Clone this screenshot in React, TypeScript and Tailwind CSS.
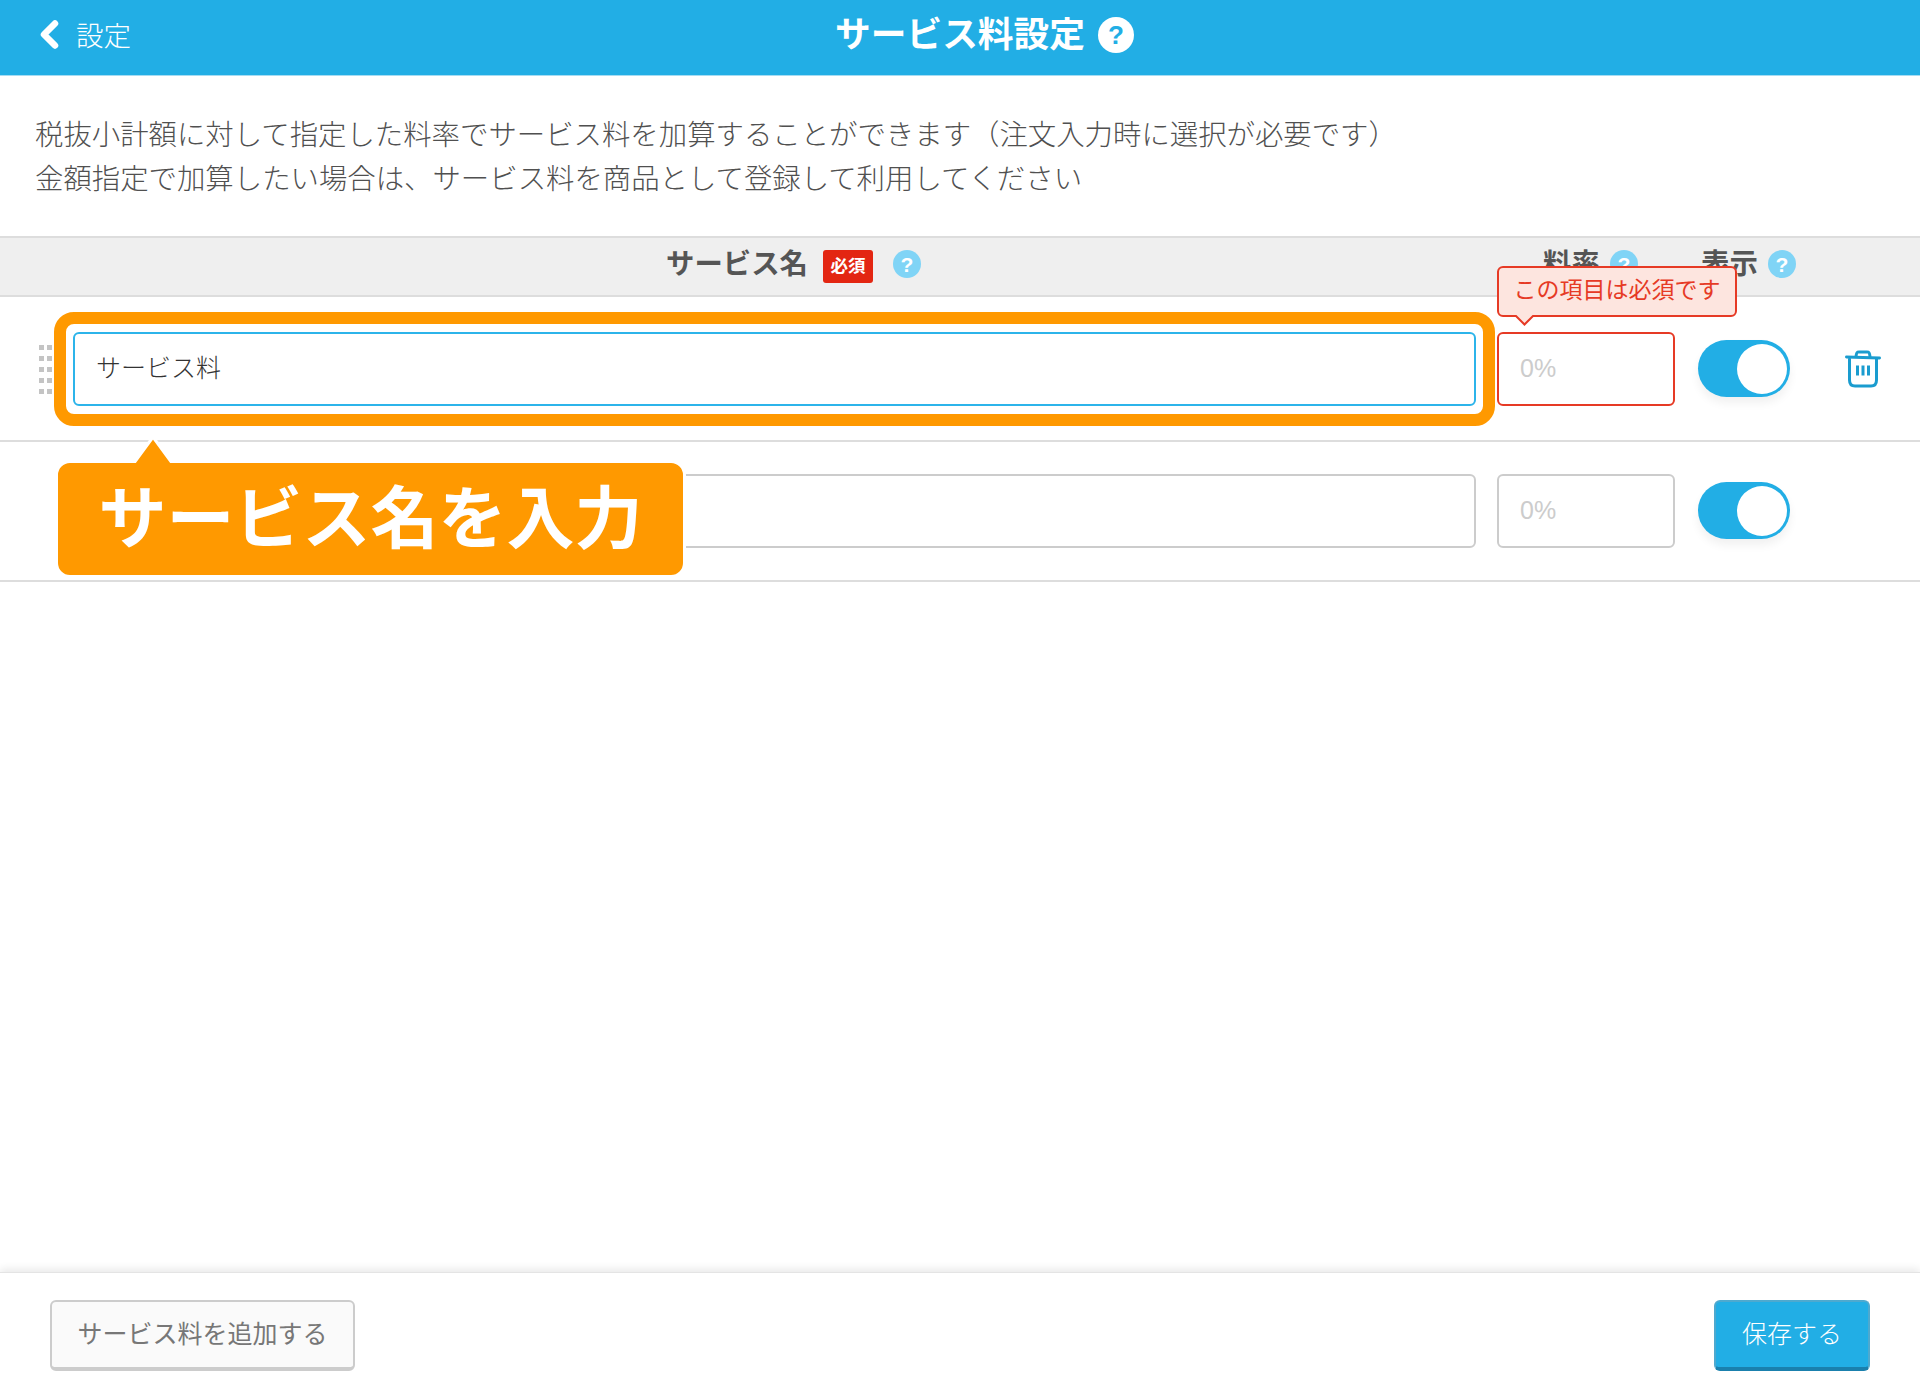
const font = "[font-family:'Liberation_Sans','Noto_Sans_CJK_JP',sans-serif]";

function Help({ white }: { white?: boolean }) {
  return (
    <span
      className={
        white
          ? "flex h-[36px] w-[36px] items-center justify-center rounded-full bg-white text-[26px] font-bold leading-none text-[#22aee5]"
          : "flex h-[28px] w-[28px] items-center justify-center rounded-full bg-[#80d4f6] text-[21px] font-bold leading-none text-white"
      }
    >
      ?
    </span>
  );
}

function Toggle() {
  return (
    <div className="mb-[1px] flex h-[57px] w-[92px] items-center justify-end rounded-full bg-[#22aee5] pr-[3px] shadow-[0_6px_10px_rgba(0,0,0,0.06)]">
      <div className="h-[50px] w-[50px] rounded-full bg-white" />
    </div>
  );
}

function Trash() {
  return (
    <svg width="36" height="38" viewBox="0 0 36 38" fill="none" stroke="#1a9ccf" strokeWidth="3" strokeLinecap="round" strokeLinejoin="round">
      <path d="M1.5 7 L34.5 8" />
      <path d="M11 6.5 C11.5 2.5 12 2 14 2 H22 C24 2 24.5 2.5 25 6.5" />
      <path d="M4.5 9 V30 C4.5 34 6.5 36 10 36 H26 C29.5 36 31.5 34 31.5 30 V9" />
      <path d="M12.5 15.5 V25.5 M18 15.5 V25.5 M23.5 15.5 V25.5" strokeWidth="3" strokeLinecap="butt" />
    </svg>
  );
}

function Handle() {
  return (
    <div className="grid w-[13px] grid-cols-[5px_5px] gap-x-[3px] gap-y-[6px]">
      {Array.from({ length: 10 }).map((_, i) => (
        <span key={i} className="h-[5px] w-[5px] bg-[#c4c4c4]" />
      ))}
    </div>
  );
}

export default function App() {
  return (
    <div className={`flex min-h-[1400px] flex-col bg-white ${font}`}>
      <header className="grid h-[76px] shrink-0 grid-cols-[1fr_auto_1fr] items-center border-b border-[#a5dcf3] bg-[#22aee5] pb-[6px] text-white">
        <div className="flex items-center pl-[40px]">
          <svg width="19" height="29" viewBox="0 0 19 29" fill="none" stroke="white" strokeWidth="6.5" strokeLinecap="round" strokeLinejoin="round">
            <path d="M15 3.5 L4 14.5 L15 25.5" />
          </svg>
          <span className="ml-[17px] mt-[4px] text-[27.5px] font-light">設定</span>
        </div>
        <h1 className="mt-[2px] text-[35.7px] font-bold leading-none">サービス料設定</h1>
        <div className="pl-[13px]">
          <Help white />
        </div>
      </header>

      <div className="h-[160px] shrink-0 pl-[35px] pt-[37px] text-[28.4px] font-light leading-[44px] text-[#505050]">
        <p className="whitespace-nowrap">税抜小計額に対して指定した料率でサービス料を加算することができます（注文入力時に選択が必要です）</p>
        <p className="whitespace-nowrap">金額指定で加算したい場合は、サービス料を商品として登録して利用してください</p>
      </div>

      <div className="flex h-[61px] shrink-0 items-center border-y-2 border-[#dddddd] bg-[#efefef] pb-[4px] text-[28.4px] font-bold text-[#555555]">
        <div className="ml-[74px] flex w-[1401px] items-center justify-center pl-[38px]">
          <span>サービス名</span>
          <span className="ml-[15px] mt-[4px] flex h-[33px] w-[50px] items-center justify-center rounded-[3px] bg-[#e32612] text-[17.5px] text-white">必須</span>
          <span className="ml-[20px]"><Help /></span>
        </div>
        <div className="ml-[22px] flex w-[177px] items-center pl-[46px]">
          <span>料率</span>
          <span className="ml-[10px]"><Help /></span>
        </div>
        <div className="ml-[27px] flex items-center">
          <span>表示</span>
          <span className="ml-[10px]"><Help /></span>
        </div>
      </div>

      <div className="flex h-[145px] shrink-0 items-center border-b-2 border-[#dddddd] pt-[1px]">
        <div className="ml-[39px] w-[34px]"><Handle /></div>
        <div className="relative w-[1403px]">
          <div className="flex h-[74px] items-center rounded-[6px] border-2 border-[#2cb4ea] bg-white pl-[21px] text-[25px] font-light text-[#333333]">サービス料</div>
          <div className="absolute -inset-x-[19px] -inset-y-[20px] rounded-[20px] border-[12px] border-[#ff9900]" />
        </div>
        <div className="relative ml-[21px] w-[178px]">
          <div className="flex h-[74px] items-center rounded-[6px] border-2 border-[#e63a25] bg-white pl-[21px] text-[25px] text-[#cccccc]">0%</div>
          <div className="absolute -top-[66px] left-0 flex h-[51px] w-[240px] items-center justify-center rounded-[6px] border-2 border-[#e63a25] bg-[#fde5df] pb-[2px] text-[23px] text-[#e63a25]">
            この項目は必須です
            <svg className="absolute -bottom-[11px] left-[15px]" width="22" height="11" viewBox="0 0 22 11">
              <path d="M1 0 L10.5 9.5 L20 0" fill="#fde5df" stroke="#e63a25" strokeWidth="2" />
            </svg>
          </div>
        </div>
        <div className="ml-[23px]"><Toggle /></div>
        <div className="ml-[55px]"><Trash /></div>
      </div>

      <div className="flex h-[140px] shrink-0 items-center border-b-2 border-[#dddddd]">
        <div className="relative ml-[73px] w-[1403px]">
          <div className="h-[74px] rounded-[6px] border-2 border-[#cccccc] bg-white" />
          <div className="absolute -left-[18px] -top-[14px] flex h-[118px] w-[631px] items-center justify-center rounded-[15px] border-[3px] border-white bg-[#ff9900] text-[68px] font-semibold leading-none text-white">
            サービス名を入力
            <svg className="absolute -top-[30px] left-[74px]" width="42" height="30" viewBox="0 0 42 30">
              <path d="M21 4 L2 30 H40 Z" fill="#ff9900" />
              <path d="M2 30 L21 4 L40 30" fill="none" stroke="white" strokeWidth="3" />
            </svg>
          </div>
        </div>
        <div className="ml-[21px] flex h-[74px] w-[178px] items-center rounded-[6px] border-2 border-[#cccccc] bg-white pl-[21px] text-[25px] text-[#cccccc]">0%</div>
        <div className="ml-[23px]"><Toggle /></div>
      </div>

      <div className="flex-1" />

      <footer className="flex h-[128px] shrink-0 items-start justify-between border-t border-[#e4e4e4] px-[50px] pt-[27px] shadow-[0_-3px_8px_rgba(0,0,0,0.09)]">
        <button className="flex h-[71px] w-[305px] items-center justify-center rounded-[6px] border-2 border-b-4 border-[#cccccc] bg-[#fafafa] text-[25px] text-[#777777]">サービス料を追加する</button>
        <button className="flex h-[71px] w-[156px] items-center justify-center rounded-[6px] border-2 border-b-4 border-[#4ea9cf] border-b-[#1a80ad] bg-[#22aee5] text-[25px] font-light text-white">保存する</button>
      </footer>
    </div>
  );
}
